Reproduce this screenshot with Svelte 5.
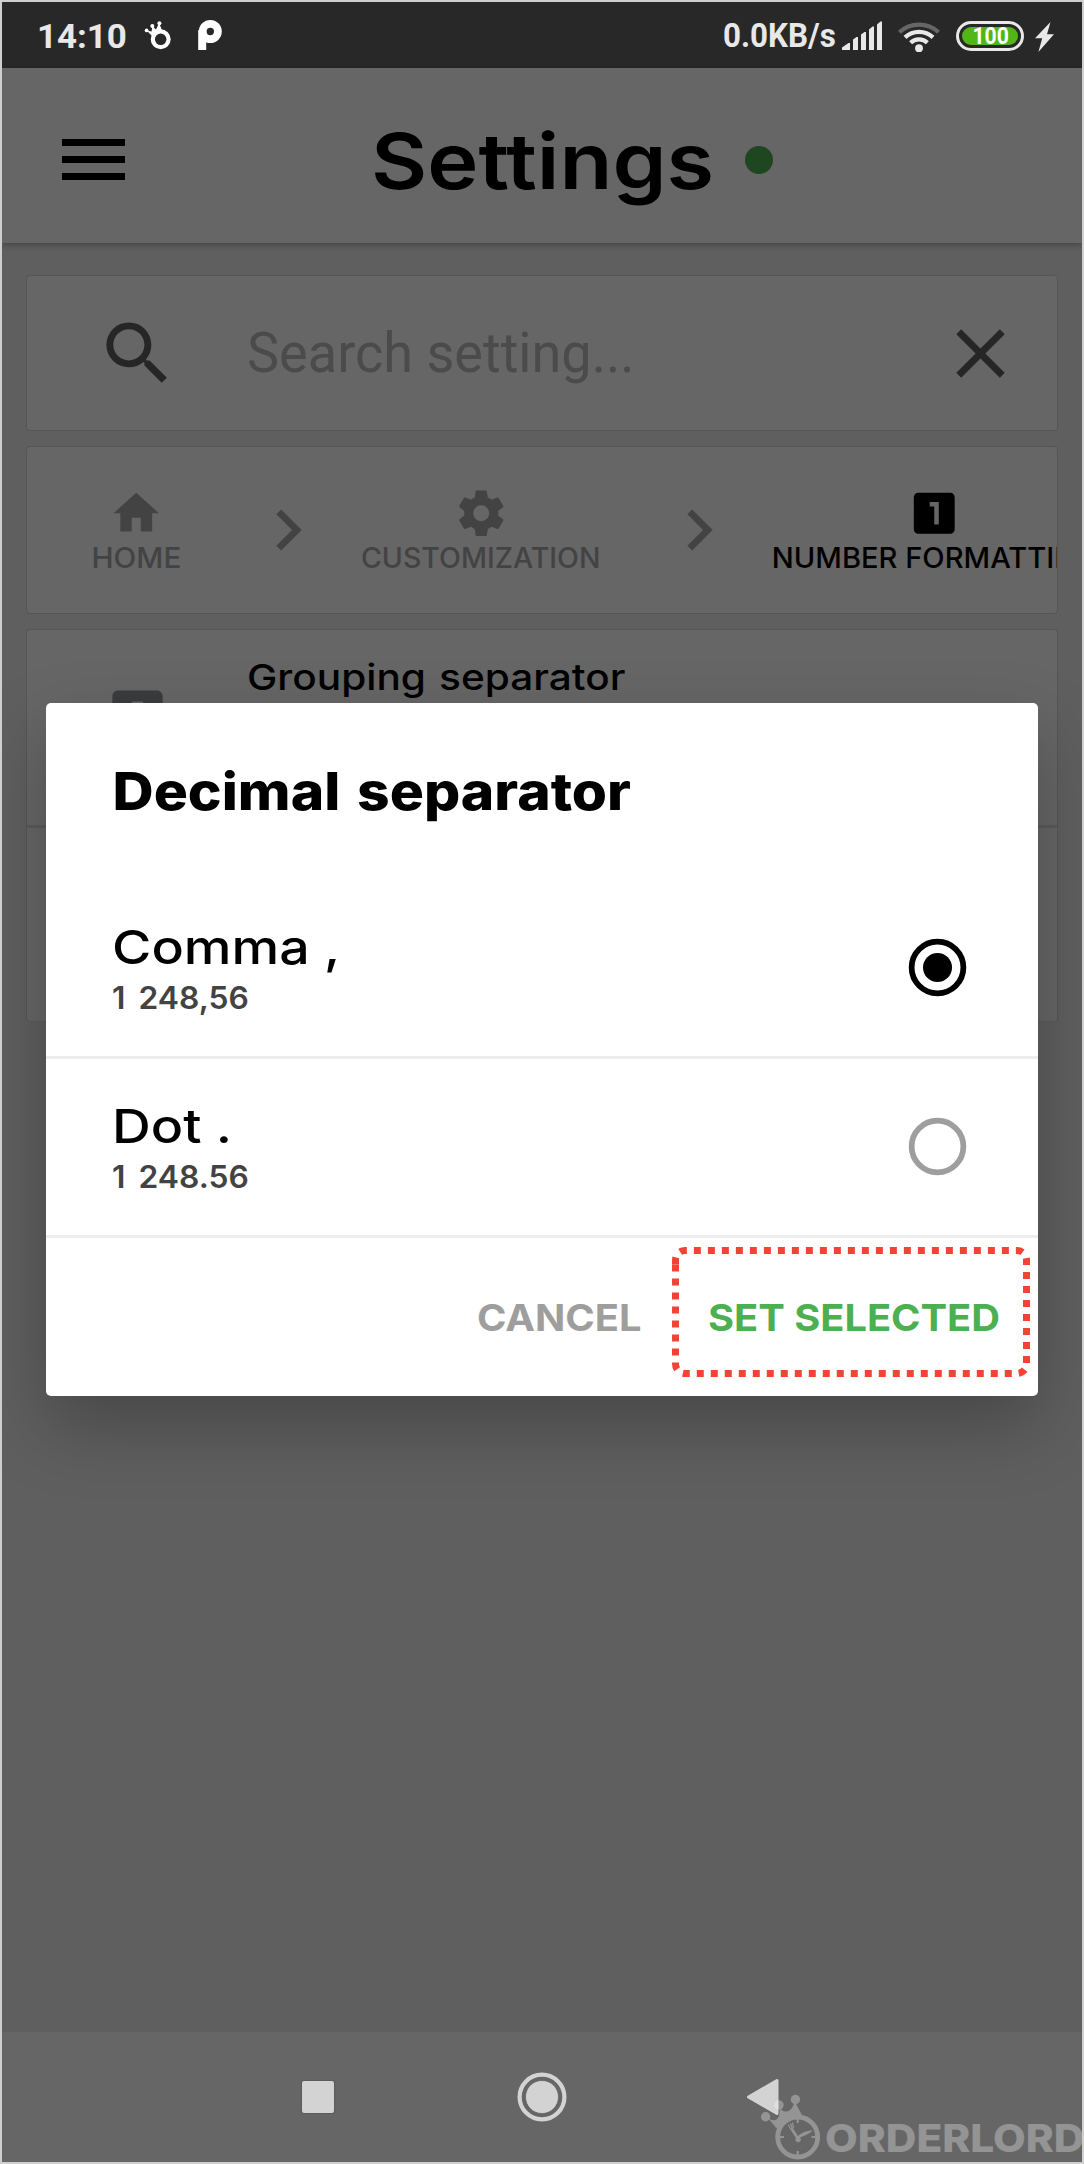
<script>
  const options = [
    { id: 'comma', name: 'Comma ,', sample: '1 248,56' },
    { id: 'dot', name: 'Dot .', sample: '1 248.56' },
  ];
  let selected = $state('comma');
</script>

<div class="screen">
  <div class="status">
    <span class="time">14:10</span>
    <svg class="crown" width="28" height="32" viewBox="0 0 28 32">
      <circle cx="16.7" cy="19.3" r="7.9" fill="none" stroke="#fff" stroke-width="4.2" />
      <path d="M9 17 L2.6 10.4 L7.6 11.6 L8.3 6 L12 9.6 L15.2 3 L18 10.5 Z" fill="#fff" />
      <circle cx="2.6" cy="10.4" r="1.9" fill="#fff" />
      <circle cx="8.3" cy="6" r="2" fill="#fff" />
      <circle cx="15.4" cy="3.2" r="2" fill="#fff" />
    </svg>
    <svg class="parking" width="24" height="30" viewBox="0 0 24 30">
      <circle cx="12.3" cy="11.5" r="7.6" fill="none" stroke="#fff" stroke-width="7.8" />
      <rect x="0.2" y="10" width="8" height="20" fill="#fff" />
    </svg>
    <span class="speed">0.0KB/s</span>
    <svg class="bars" width="41" height="30" viewBox="0 0 41 30" fill="#e8e8e8">
      <path d="M0 29V26.500L6.500 22H8V29Z" />
      <path d="M11 29V18.500L14.500 16H16V29Z" />
      <path d="M19 29V13.500L22.500 11H24V29Z" />
      <path d="M27 29V8.500L30.500 5.500H32V29Z" />
      <path d="M35 29V3.500L38.500 0.500H40V29Z" />
    </svg>
    <svg class="wifi" width="42" height="32" viewBox="0 0 42 32" fill="none" stroke-width="4.2">
      <path d="M1.400 11.200A29 29 0 0 1 40.600 11.200" stroke="#666" />
      <path d="M7 16.400A20.500 20.500 0 0 1 35 16.400" stroke="#e8e8e8" />
      <path d="M12.600 21.800A12 12 0 0 1 29.400 21.800" stroke="#e8e8e8" />
      <circle cx="21" cy="27.200" r="3.900" fill="#e8e8e8" />
    </svg>
    <div class="battery"><div class="charge"><span>100</span></div></div>
    <svg class="bolt" width="19" height="30" viewBox="0 0 19 30"><path d="M15.500 0L0 16.300H7.200L3.400 30L19 12.300H12Z" fill="#e8e8e8" /></svg>
  </div>

  <header>
    <div class="burger"><i></i><i></i><i></i></div>
    <h1>Settings</h1>
    <span class="online"></span>
  </header>

  <main>
    <section class="card search">
      <svg class="glyph" viewBox="0 0 24 24"><path d="M15.500 14h-.79l-.28-.27A6.470 6.470 0 0 0 16 9.500 6.500 6.500 0 1 0 9.500 16c1.610 0 3.090-.59 4.230-1.570l.27.28v.79l5 4.990L20.490 19l-4.990-5zm-6 0C7.010 14 5 11.990 5 9.500S7.010 5 9.500 5 14 7.010 14 9.500 11.990 14 9.500 14z" /></svg>
      <span class="hint">Search setting...</span>
      <svg class="glyph" viewBox="0 0 24 24"><path d="M19 6.410L17.590 5 12 10.590 6.410 5 5 6.410 10.590 12 5 17.590 6.410 19 12 13.410 17.590 19 19 17.590 13.410 12z" /></svg>
    </section>

    <nav class="card crumbs">
      <div class="crumb home">
        <svg viewBox="0 0 24 24"><path d="M10 20v-6h4v6h5v-8h3L12 3 2 12h3v8z" /></svg>
        <span>HOME</span>
      </div>
      <svg class="chev first" viewBox="0 0 24 24"><path d="M10 6L8.590 7.410 13.170 12l-4.580 4.590L10 18l6-6z" /></svg>
      <div class="crumb custom">
        <svg viewBox="0 0 24 24"><path d="M19.430 12.980c.04-.32.07-.64.07-.98s-.03-.66-.07-.98l2.110-1.650c.19-.15.24-.42.12-.64l-2-3.460c-.12-.22-.39-.3-.61-.22l-2.490 1c-.52-.4-1.080-.73-1.690-.98l-.38-2.650A.488.488 0 0 0 14 2h-4c-.25 0-.46.18-.49.42l-.38 2.650c-.61.25-1.170.59-1.690.98l-2.490-1c-.23-.09-.49 0-.61.22l-2 3.460c-.13.22-.07.49.12.64l2.110 1.650c-.04.32-.07.65-.07.98s.03.66.07.98l-2.110 1.650c-.19.15-.24.42-.12.64l2 3.460c.12.22.39.3.61.22l2.490-1c.52.4 1.080.73 1.690.98l.38 2.650c.03.24.24.42.49.42h4c.25 0 .46-.18.49-.42l.38-2.650c.61-.25 1.170-.59 1.690-.98l2.490 1c.23.09.49 0 .61-.22l2-3.460c.12-.22.07-.49-.12-.64l-2.110-1.650zM12 15.500c-1.930 0-3.500-1.570-3.500-3.500s1.570-3.500 3.500-3.500 3.500 1.570 3.500 3.500-1.570 3.500-3.500 3.500z" /></svg>
        <span>CUSTOMIZATION</span>
      </div>
      <svg class="chev second" viewBox="0 0 24 24"><path d="M10 6L8.590 7.410 13.170 12l-4.580 4.590L10 18l6-6z" /></svg>
      <div class="crumb number">
        <svg viewBox="0 0 24 24"><path d="M19 3H5c-1.100 0-2 .9-2 2v14c0 1.100.9 2 2 2h14c1.100 0 2-.9 2-2V5c0-1.100-.9-2-2-2zm-5 14h-2V9h-2V7h4v10z" /></svg>
        <span>NUMBER FORMATTING</span>
      </div>
    </nav>

    <section class="card list">
      <div class="setting">
        <svg viewBox="0 0 24 24"><path d="M19 3H5c-1.100 0-2 .9-2 2v14c0 1.100.9 2 2 2h14c1.100 0 2-.9 2-2V5c0-1.100-.9-2-2-2zm-5 14h-2V9h-2V7h4v10z" /></svg>
        <span>Grouping separator</span>
      </div>
      <div class="setting"></div>
    </section>
  </main>

  <div class="navbar">
    <span class="recent"></span>
    <svg class="homebtn" width="50" height="50" viewBox="0 0 50 50">
      <circle cx="25" cy="25" r="22.400" fill="none" stroke="#d3d3d3" stroke-width="4.200" />
      <circle cx="25" cy="25" r="16.500" fill="#d3d3d3" stroke="#555" stroke-width=".6" />
    </svg>
    <svg class="back" width="34" height="40" viewBox="0 0 34 40"><path d="M2.500 20L31 3.500V36.500Z" fill="#d3d3d3" stroke="#d3d3d3" stroke-width="3" stroke-linejoin="round" /></svg>
  </div>

  <div class="brand">
    <svg width="64" height="66" viewBox="0 0 64 66">
      <g fill="#fff">
        <path d="M18 36L7.500 23.500C11 27 15.500 27 17.500 24.500C20 21.500 20 16.500 19 12.500C21 17 25 18.500 28.500 17C32 15.500 34 11 34.500 7L42 21.300A22.300 22.300 0 0 0 18 36Z" />
        <circle cx="5.600" cy="22.700" r="4.700" />
        <circle cx="19" cy="11" r="4.700" />
        <circle cx="35.400" cy="5.500" r="4.700" />
      </g>
      <circle cx="37.700" cy="43" r="20" fill="none" stroke="#fff" stroke-width="4.800" />
      <g fill="none" stroke="#fff">
        <path d="M37.700 25V29M37.700 57V61M20 43H24M51.500 43H55.500" stroke-width="2.200" />
        <path d="M37.500 44L31.500 34.500" stroke-width="2.800" />
        <path d="M28.200 30.500L31 35.500M30.400 29.200L32.500 34.800M32.400 28.500L33.600 33.800" stroke-width="1.200" />
      </g>
      <path d="M36 44C41 38.500 46 36.500 53 36.500C49 40 44 42 40 43.500A2.700 2.700 0 1 1 36 44Z" fill="#fff" />
    </svg>
    <span>ORDERLORD</span>
  </div>

  <div class="dialog" role="dialog">
    <h2>Decimal separator</h2>
    {#each options as o (o.id)}
      <div class="option" class:on={selected === o.id} onclick={() => (selected = o.id)} role="presentation">
        <div class="text">
          <p class="name">{o.name}</p>
          <p class="sample">{o.sample}</p>
        </div>
        <svg class="radio" viewBox="0 0 24 24">
          <circle cx="12" cy="12" r="9" fill="none" stroke="currentColor" stroke-width="2" />
          {#if selected === o.id}<circle cx="12" cy="12" r="5.050" fill="currentColor" />{/if}
        </svg>
      </div>
    {/each}
    <div class="actions">
      <span class="cancel">CANCEL</span>
      <span class="confirm">SET SELECTED</span>
    </div>
    <svg class="highlight" width="360" height="130" viewBox="0 0 360 130">
      <path d="M3.500 17.300V13A9.500 9.500 0 0 1 13 3.500H345A9.500 9.500 0 0 1 354.500 13V117A9.500 9.500 0 0 1 345 126.500H13A9.500 9.500 0 0 1 3.500 117Z" fill="none" stroke="#f44336" stroke-width="7" stroke-dasharray="7 7" />
    </svg>
  </div>
</div>

<style>
  :global(body) { margin: 0; background: #cfcfcf; }
  * { box-sizing: border-box; }
  h1, h2, p { margin: 0; }
  .screen {
    position: relative; width: 1084px; height: 2164px; overflow: hidden;
    border: 2px solid #cfcfcf; background: #5f5f5f;
    display: flex; flex-direction: column;
    font-family: Inter, 'Liberation Sans', sans-serif; color: #000;
  }

  .status { height: 66px; flex: none; background: #282828; display: flex; align-items: center; color: #e8e8e8; font-family: Roboto, sans-serif; }
  .time { margin-left: 35px; width: 88px; font-size: 34px; font-weight: 700; line-height: 40px; padding-top: 1px; transform: scaleX(1.026); transform-origin: 0 0; }
  .crown { margin-left: 19px; margin-top: 1px; }
  .parking { margin-left: 26px; }
  .speed { margin-left: 501px; width: 118.700px; font-size: 33px; font-weight: 700; line-height: 40px; padding-top: 1px; transform: scaleX(.95); transform-origin: 0 0; }
  .bars { margin-left: .5px; margin-top: 2px; }
  .wifi { margin-left: 15px; margin-top: 3px; }
  .battery { margin-left: 16px; margin-top: 2px; width: 68px; height: 30px; border: 3px solid #e8e8e8; border-radius: 15px; padding: 3px; }
  .charge { height: 18px; border-radius: 9px; background: #52b518; display: flex; justify-content: center; align-items: center; color: #fff; }
  .charge span { font-size: 24px; font-weight: 700; line-height: 24px; transform: scaleX(.88); }
  .bolt { margin-left: 10.500px; margin-top: 3px; }

  header { height: 175px; flex: none; display: flex; align-items: center; padding: 8px 0 0 60px; background: #666; box-shadow: 0 2px 6px rgba(0, 0, 0, .3); z-index: 1; }
  .burger { width: 63px; display: grid; gap: 10px; }
  .burger i { height: 7px; background: #000; }
  h1 { margin: 2px 0 0 246px; width: 305.300px; font-size: 77px; font-weight: 600; line-height: 90px; transform: scaleX(1.124); transform-origin: 0 0; }
  .online { margin-left: 69.200px; width: 28px; height: 28px; border-radius: 50%; background: #1e4620; }

  main { flex: 1; padding: 32px 24px 0 24px; display: flex; flex-direction: column; gap: 15px; }
  .card { background: #666; border: 1px solid #555; border-radius: 4px; }
  .search { height: 156px; display: flex; align-items: center; padding: 0 35.500px 0 68.500px; color: #262626; }
  .glyph { width: 83px; height: 83px; fill: currentColor; }
  .hint { flex: 1; margin-left: 68.500px; font: 400 56px/70px Roboto, sans-serif; color: #4b4b4b; white-space: nowrap; transform: scaleX(.965); transform-origin: 0 0; }

  .crumbs { height: 168px; display: flex; align-items: center; overflow: hidden; padding-left: 66.500px; color: #434343; }
  .crumb { flex: none; display: flex; flex-direction: column; align-items: center; font-size: 28px; font-weight: 500; line-height: 34px; white-space: nowrap; padding-top: 1px; }
  .crumb svg { width: 54.500px; height: 54.500px; fill: currentColor; }
  .home { width: 86px; }
  .home span { transform: scaleX(1.06); }
  .custom { width: 237px; }
  .custom span { transform: scaleX(1.018); }
  .number { width: 320px; color: #000; }
  .number span { transform: scaleX(1.04); }
  .chev { flex: none; width: 82px; height: 82px; fill: currentColor; }
  .first { margin: 0 34px 0 67px; }
  .second { margin: 0 35px 0 58px; }

  .list { height: 393px; border-bottom-color: #5b5b5b; }
  .setting { height: 195px; display: flex; align-items: flex-start; padding: 24px 0 0 76.500px; }
  .setting + .setting { border-top: 3px solid #5b5b5b; }
  .setting svg { width: 67px; height: 67px; margin-top: 28px; fill: #3b3c3d; }
  .setting span { margin-left: 76px; font-size: 36px; font-weight: 500; line-height: 46px; white-space: nowrap; word-spacing: 2px; transform: scaleX(1.127); transform-origin: 0 0; }

  .navbar { height: 130px; flex: none; background: #666; display: flex; align-items: center; padding-left: 300px; }
  .recent { width: 32px; height: 32px; border-radius: 2px; background: #d3d3d3; box-shadow: 0 0 1px 1px #5a5a5a; }
  .homebtn { margin-left: 183px; }
  .back { margin-left: 178.500px; }

  .brand { position: absolute; left: 758px; top: 2092px; display: flex; opacity: .3; color: #fff; }
  .brand span { margin: 22px 0 0 1px; font-size: 38.500px; font-weight: 800; line-height: 44px; transform: scaleX(1.1); transform-origin: 0 0; }

  .dialog { position: absolute; z-index: 2; left: 44px; top: 701px; width: 992px; height: 693px; border-radius: 5px; background: #fff; box-shadow: 0 30px 70px rgba(0, 0, 0, .25); }
  h2 { height: 177px; padding: 58.500px 0 0 66.500px; font-size: 52px; font-weight: 800; line-height: 60px; white-space: nowrap; word-spacing: 4px; transform: scaleX(1.095); transform-origin: 66.500px 0; }
  .option { height: 179px; border-bottom: 3px solid #ededed; display: flex; align-items: center; justify-content: space-between; padding: 0 66px 0 65.500px; }
  .text { padding-top: 1px; }
  .name { font-size: 47px; font-weight: 500; line-height: 56px; white-space: pre; transform: scaleX(1.143); transform-origin: 0 0; }
  .sample { margin: 3px 0 0 .5px; font-size: 31px; font-weight: 600; line-height: 40px; color: #434343; word-spacing: 5px; transform: scaleX(1.025); transform-origin: 0 0; }
  .radio { width: 69px; height: 69px; margin-top: -1px; color: #9e9e9e; }
  .on .radio { color: #000; }
  .actions { height: 158px; display: flex; align-items: center; padding: 1px 0 0 431px; gap: 76px; font-size: 37.400px; font-weight: 700; line-height: 48px; white-space: nowrap; }
  .actions span { transform: scaleX(1.064); transform-origin: 0 0; }
  .cancel { color: #9e9e9e; }
  .confirm { color: #4caf50; }
  .highlight { position: absolute; left: 626px; top: 544px; }
</style>
